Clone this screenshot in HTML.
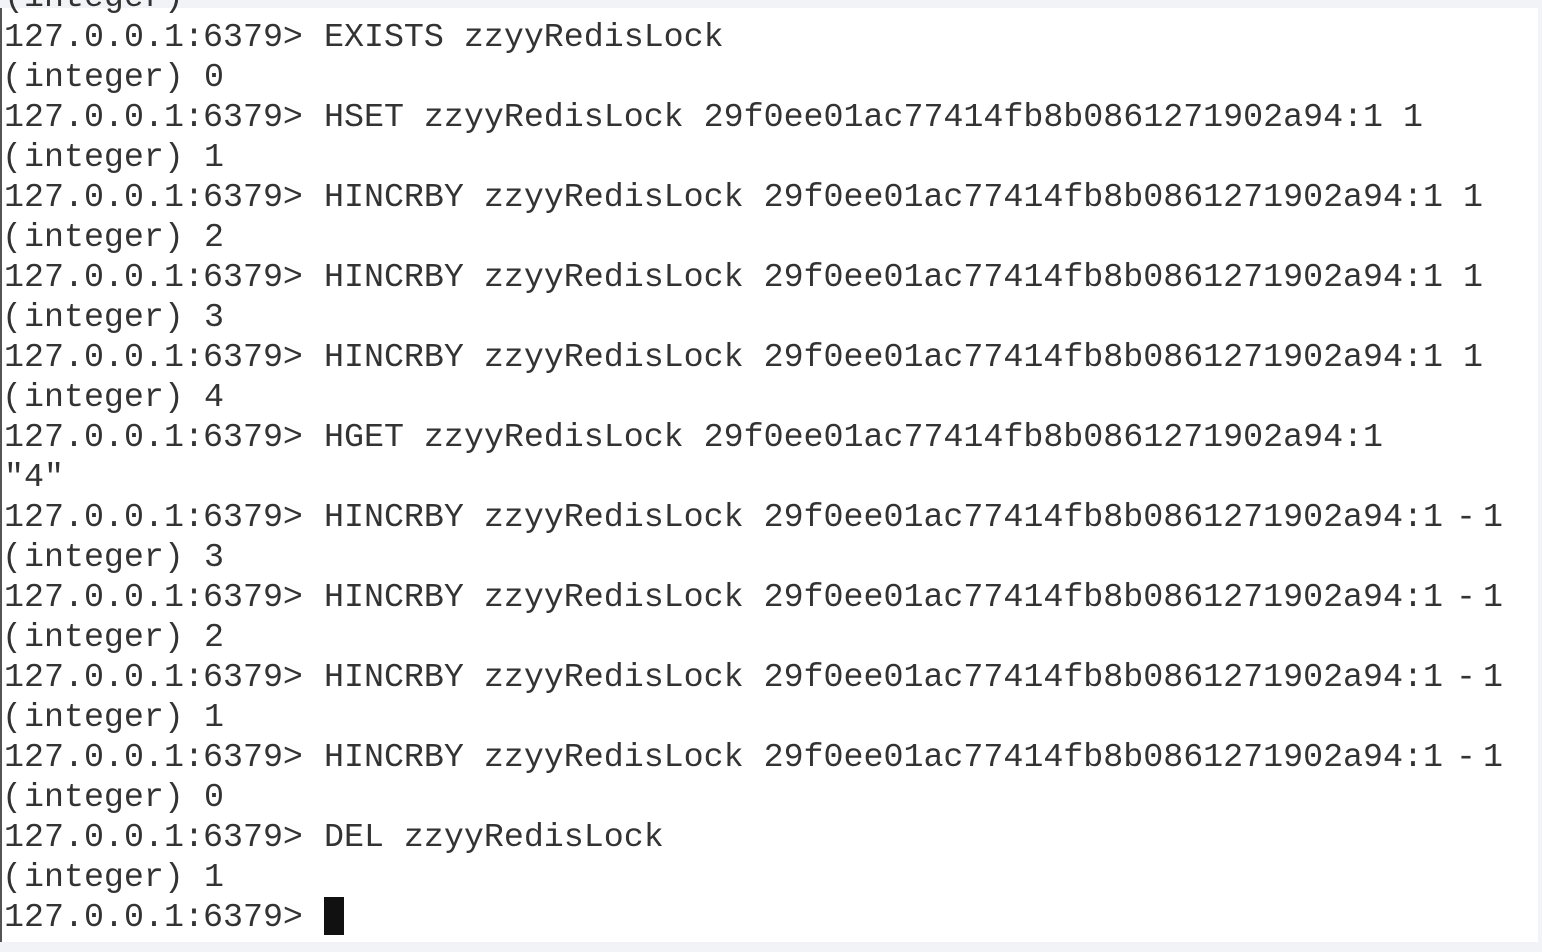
<!DOCTYPE html>
<html><head><meta charset="utf-8"><style>
body{margin:0;width:1542px;height:952px;background:#f2f3f7;overflow:hidden;position:relative;font-family:"Liberation Mono",monospace;font-size:33.3px;color:#333}
#t{position:absolute;left:0;top:8px;width:1538px;height:934px;background:#fff;border-left:2px solid #555;box-sizing:border-box}
.s{position:absolute;white-space:pre;line-height:40px;height:40px}
</style></head><body>
<div id="t"></div>
<div id="c"></div>
<script>
var lines=[
["p","EXISTS zzyyRedisLock"],["i","0"],
["p","HSET zzyyRedisLock 29f0ee01ac77414fb8b0861271902a94:1 1"],["i","1"],
["p","HINCRBY zzyyRedisLock 29f0ee01ac77414fb8b0861271902a94:1 1"],["i","2"],
["p","HINCRBY zzyyRedisLock 29f0ee01ac77414fb8b0861271902a94:1 1"],["i","3"],
["p","HINCRBY zzyyRedisLock 29f0ee01ac77414fb8b0861271902a94:1 1"],["i","4"],
["p","HGET zzyyRedisLock 29f0ee01ac77414fb8b0861271902a94:1"],["q","\"4\""],
["m","HINCRBY zzyyRedisLock 29f0ee01ac77414fb8b0861271902a94:1"],["i","3"],
["m","HINCRBY zzyyRedisLock 29f0ee01ac77414fb8b0861271902a94:1"],["i","2"],
["m","HINCRBY zzyyRedisLock 29f0ee01ac77414fb8b0861271902a94:1"],["i","1"],
["m","HINCRBY zzyyRedisLock 29f0ee01ac77414fb8b0861271902a94:1"],["i","0"],
["p","DEL zzyyRedisLock"],["i","1"],["p",""]];
var h="";
function sp(x,y,t){return '<div class="s" style="left:'+x+'px;top:'+y+'px">'+t+'</div>';}
lines.forEach(function(l,i){
 var y=17+40*i;
 if(l[0]=="p"||l[0]=="m"){
  h+=sp(4,y,"127.")+sp(84,y,"0.")+sp(124,y,"0.")+sp(164,y,"1:")+sp(203,y,"6379&gt;")+sp(324,y,l[1]);
  if(l[0]=="m")h+=sp(1456,y,"-")+sp(1483,y,"1");
 }else if(l[0]=="i"){
  h+=sp(2,y,"(")+sp(24,y,"integer)")+sp(204,y,l[1]);
 }else h+=sp(4,y,l[1].replace(/"/g,"&quot;"));
});
h+='<div style="position:absolute;left:324px;top:897px;width:20px;height:38px;background:#111"></div>';
h+=sp(4,-23,"(integer)");
document.getElementById("c").innerHTML=h;
</script>
</body></html>
